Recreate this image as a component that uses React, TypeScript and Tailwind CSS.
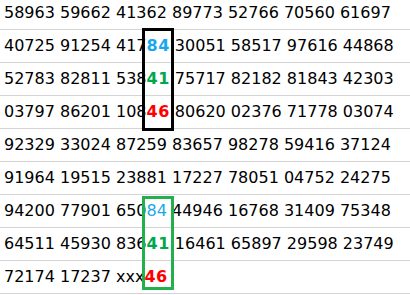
import React from 'react';

type Part = { t: string; c?: 'blue' | 'green' | 'red'; b?: boolean };

const rows: Part[][] = [
    [{ t: '58963 59662 41362 89773 52766 70560 61697' }],
    [{ t: '40725 91254 417' }, { t: '84', c: 'blue', b: true }, { t: ' 30051 58517 97616 44868' }],
    [{ t: '52783 82811 538' }, { t: '41', c: 'green', b: true }, { t: ' 75717 82182 81843 42303' }],
    [{ t: '03797 86201 108' }, { t: '46', c: 'red', b: true }, { t: ' 80620 02376 71778 03074' }],
    [{ t: '92329 33024 87259 83657 98278 59416 37124' }],
    [{ t: '91964 19515 23881 17227 78051 04752 24275' }],
    [{ t: '94200 77901 650' }, { t: '84', c: 'blue' }, { t: ' 44946 16768 31409 75348' }],
    [{ t: '64511 45930 836' }, { t: '41', c: 'green', b: true }, { t: ' 16461 65897 29598 23749' }],
    [{ t: '72174 17237 xxx' }, { t: '46', c: 'red', b: true }],
];

const colorClass = {
    blue: 'text-[#1aa8ec]',
    green: 'text-[#00a84c]',
    red: 'text-[#ff0000]',
};

const App = () => {
    return (
        <div className="relative w-[410px] h-[295px] overflow-hidden bg-white text-black font-['DejaVu_Sans',sans-serif] text-[16px]">
            <div className="-mt-[3px] flex flex-col">
                {rows.map((row, i) => (
                    <div key={i} className="h-[33px] flex items-center pl-[4px] border-b border-[#d4d4d4] whitespace-pre">
                        {row.map((p, j) => (
                            <span
                                key={j}
                                className={`${p.c ? colorClass[p.c] : ''} ${p.b ? 'font-bold tracking-[0.5px]' : ''}`}
                            >
                                {p.t}
                            </span>
                        ))}
                    </div>
                ))}
            </div>

            {/* highlight boxes */}
            <div className="absolute left-[142px] top-[28px] w-[32px] h-[103px] border-[3px] border-black" />
            <div className="absolute left-[142px] top-[196px] w-[32px] h-[94px] border-[3px] border-[#22b04c]" />
        </div>
    );
};

export default App;
